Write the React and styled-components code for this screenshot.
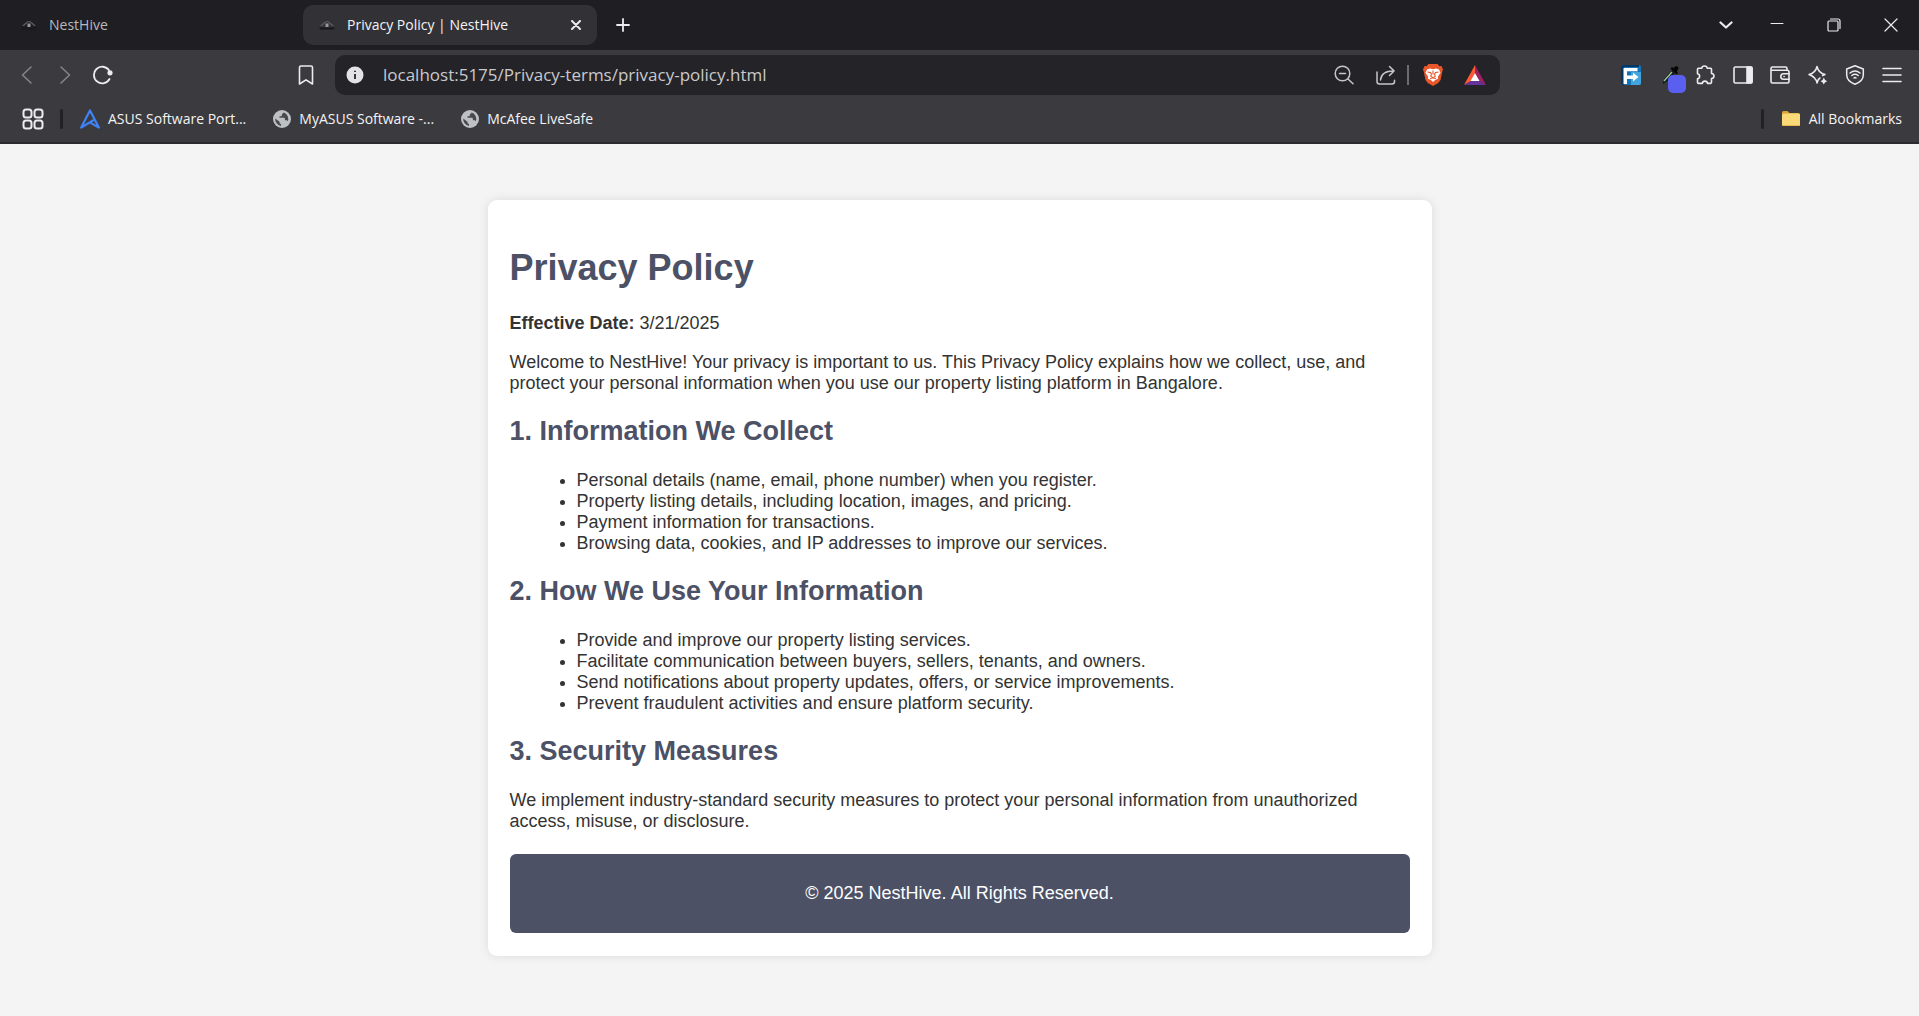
import React from "react";
import styled, { createGlobalStyle } from "styled-components";

const GlobalStyle = createGlobalStyle`
  body {
    margin: 0;
    background: #f4f4f4;
    font-family: "Liberation Sans", Arial, sans-serif;
    font-size: 18px;
    line-height: 21px;
    color: #333;
  }
`;

/* ---------- browser chrome ---------- */

const Chrome = styled.header`
  background: #3b3a3e;
  color: #f3f3f5;
  font-family: "Open Sans", "Noto Sans", sans-serif;
  font-size: 14px;
  line-height: 20px;
  border-bottom: 2px solid #2d2b31;
`;

const TabStrip = styled.div`
  display: flex;
  align-items: center;
  height: 50px;
  padding-left: 5px;
  background: #1f1e23;
`;

const TabList = styled.div`
  display: flex;
  gap: 4px;
  margin-right: 8px;
`;

const Tab = styled.div`
  box-sizing: border-box;
  display: flex;
  align-items: center;
  width: 294px;
  height: 40px;
  padding: 0 8px 0 16px;
  border-radius: 10px;
  background: ${(p) => (p.$active ? "#323136" : "transparent")};
`;

const TabTitle = styled.button`
  flex: 1;
  display: flex;
  align-items: center;
  gap: 12px;
  padding: 0;
  border: 0;
  background: none;
  font: inherit;
  text-align: left;
  white-space: nowrap;
  color: ${(p) => (p.$active ? "#f3f3f5" : "#b9b9bc")};
`;

const tones = { bright: "#ececee", soft: "#c6c5ca", dim: "#858489" };

const IconButton = styled.button`
  flex: none;
  display: flex;
  align-items: center;
  justify-content: center;
  width: ${(p) => p.$width || 38}px;
  height: ${(p) => p.$height || 40}px;
  padding: 0;
  border: 0;
  background: none;
  color: ${(p) => tones[p.$tone || "bright"]};
`;

const Spacer = styled.div`
  flex: 1;
`;

const Toolbar = styled.div`
  display: flex;
  align-items: center;
  height: 50px;
  padding: 0 8px;
`;

const NavGroup = styled.nav`
  display: flex;
  flex: 0 0 317px;
  margin-right: 10px;
`;

const AddressBar = styled.form`
  flex: 1;
  display: flex;
  align-items: center;
  height: 40px;
  padding-right: 4px;
  border-radius: 10px;
  background: #242328;
`;

const AddressInput = styled.input`
  flex: 1;
  min-width: 0;
  padding: 0;
  margin-left: 8px;
  border: 0;
  outline: 0;
  background: none;
  font: inherit;
  font-size: 17px;
  line-height: 24px;
  color: #c9c9cd;
`;

const AddressDivider = styled.span`
  width: 2px;
  height: 20px;
  margin-right: 3px;
  background: #6c6b71;
`;

const ExtensionGroup = styled.div`
  display: flex;
  flex: 0 0 299px;
  justify-content: space-between;
  margin-left: 112px;
`;

const BookmarkBar = styled.div`
  display: flex;
  align-items: center;
  height: 38px;
  padding: 0 17px 4px 14px;
`;

const BarDivider = styled.span`
  width: 3px;
  height: 20px;
  margin: 0 17px 0 8px;
  border-radius: 2px;
  background: #222126;
`;

const BookmarkLinks = styled.div`
  display: flex;
  gap: 27px;
`;

const BookmarkLink = styled.a`
  display: flex;
  align-items: center;
  gap: 8px;
  color: inherit;
  text-decoration: none;
  white-space: nowrap;
`;

const Glyph = ({ size = 24, width = 1.6, children, box = 24 }) => (
  <svg
    width={size}
    height={size}
    viewBox={`0 0 ${box} ${box}`}
    fill="none"
    stroke="currentColor"
    strokeWidth={width}
    strokeLinecap="round"
    strokeLinejoin="round"
    aria-hidden="true"
  >
    {children}
  </svg>
);

const Favicon = () => (
  <Glyph size={16} box={16} width={1.2}>
    <path d="M2 8.500C4.500 7.500 5.500 4.500 8 4.500s3.500 3 6 4" stroke="#5d5c60" />
    <path d="M1.500 11.500h13" stroke="#19181b" strokeWidth="2" />
    <rect x="6.500" y="6.500" width="3" height="3.500" fill="#98979b" stroke="none" />
  </Glyph>
);

const Globe = () => (
  <svg width="18" height="18" viewBox="0 0 18 18" aria-hidden="true">
    <circle cx="9" cy="9" r="9" fill="#bdc1c6" />
    <path
      d="M10.500 2.200c.3 1.200-.6 1.600-1.600 1.800v1.200c0 .7-.5 1-1.200 1H6.500v1.600h4c.9 0 1.400.5 1.400 1.300v1.200h1.300c.9 0 1.400.4 1.600 1.100A7 7 0 0 0 10.500 2.200ZM2.200 8.400A7 7 0 0 0 8 15.900v-2c-.9 0-1.500-.5-1.500-1.400v-.8Z"
      fill="#48494d"
    />
  </svg>
);

const AsusMark = () => (
  <svg width="20" height="20" viewBox="0 0 20 20" fill="none" stroke="#3f83f8" strokeWidth="2.200" strokeLinejoin="round" strokeLinecap="round" aria-hidden="true">
    <path d="M10 1.500 1.200 18.600 12.800 11.500M10 1.500l8.800 17.100-9-5.200" />
  </svg>
);

const FolderIcon = () => (
  <svg width="20" height="18" viewBox="0 0 20 18" aria-hidden="true">
    <path d="M1 2.500Q1 1 2.500 1h4L8.500 3H17q2 0 2 2v9H1z" fill="#d9a23a" />
    <rect x="1" y="3.500" width="18" height="12.500" rx="1.500" fill="#f9d978" />
    <path d="M1.500 15.500h17" stroke="#eab84e" />
  </svg>
);

const BraveIcon = () => (
  <svg width="22" height="24" viewBox="0 0 22 24" aria-hidden="true">
    <path d="M6.500 1h9l2 2.200 2-.3L21 6.500l-.7 2L18.500 17l-2.300 3L11 23l-5.200-3-2.300-3L1.700 8.500 1 6.500l1.500-3.600 2 .3z" fill="#e9572b" />
    <path d="m5 6.500 3-1 3 .7 3-.7 3 1 1.500 3.300-2.700 4 .4 2-3 1.200L11 19l-2.200-2-3-1.200.4-2-2.700-4z" fill="#fff" />
    <path d="m5.500 9 3 .6 1 1.400-.8 2.200L11 14.600l2.300-1.400-.8-2.200 1-1.400 3-.6M11 7.500v4M8 15.700l3-.9 3 .9" fill="none" stroke="#e9572b" strokeWidth="1.100" />
  </svg>
);

const BatIcon = () => (
  <svg width="24" height="22" viewBox="0 0 24 22" aria-hidden="true">
    <path d="M12 1 1 21l7-4 4-8z" fill="#ff5a30" />
    <path d="m12 1 11 20-7-4-4-8z" fill="#9e2065" />
    <path d="M1 21h22l-7-4H8z" fill="#66339a" />
    <path d="m12 9 4.500 8h-9z" fill="#fff" />
  </svg>
);

const ForwardExtension = () => (
  <svg width="20" height="20" viewBox="0 0 20 20" aria-hidden="true">
    <rect width="20" height="20" rx="2" fill="#1474b8" />
    <path d="M10 7h10v11q0 2-2 2h-8z" fill="#42a5dd" />
    <path d="M0 2q0-2 2-2h16v2H3v18H2q-2 0-2-2z" fill="#063764" />
    <path d="M2.500 3h14v3.200H6v4.300h6V7.800L17.500 12 12 16.500V14H6v5H2.500z" fill="#fff" />
  </svg>
);

const DropperExtension = () => (
  <svg width="36" height="36" viewBox="0 0 36 36" aria-hidden="true">
    <path d="m13 25 1.500-3.500L22 13l3 3-7.500 8-4.500 3z" fill="#171719" />
    <path d="m14 24 8-9" stroke="#94c99a" strokeWidth="1.400" />
    <path d="m20.500 11.500 6 6 1.500-1.500-1.200-1.500 1.400-2.500c1-2-1-3.500-3-2.500L23.500 11 22 10z" fill="#050505" />
    <rect x="18" y="18" width="18" height="18" rx="5" fill="#5a5ff0" />
  </svg>
);

const pageTabs = [
  { title: "NestHive", active: false },
  { title: "Privacy Policy | NestHive", active: true },
];

const bookmarks = [
  { label: "ASUS Software Port...", icon: <AsusMark /> },
  { label: "MyASUS Software -...", icon: <Globe /> },
  { label: "McAfee LiveSafe", icon: <Globe /> },
];

const BrowserChrome = () => (
  <Chrome>
    <TabStrip>
      <TabList>
        {pageTabs.map((tab) => (
          <Tab key={tab.title} $active={tab.active}>
            <TabTitle type="button" $active={tab.active}>
              <Favicon />
              {tab.title}
            </TabTitle>
            {tab.active && (
              <IconButton $width={26} $height={26} type="button" aria-label="Close tab">
                <Glyph size={10} box={10} width={2}><path d="m1 1 8 8M9 1 1 9" /></Glyph>
              </IconButton>
            )}
          </Tab>
        ))}
      </TabList>
      <IconButton $width={36} type="button" aria-label="New tab">
        <Glyph size={14} box={14} width={1.8}><path d="M7 1v12M1 7h12" /></Glyph>
      </IconButton>
      <Spacer />
      <IconButton $width={44} type="button" aria-label="Search tabs">
        <Glyph size={14} box={14} width={2.2}><path d="m1.500 4.500 5.500 5 5.500-5" /></Glyph>
      </IconButton>
      <IconButton $width={57} $height={50} type="button" aria-label="Minimize">
        <Glyph size={14} box={14} width={1}><path d="M1 5.500h12" /></Glyph>
      </IconButton>
      <IconButton $width={57} $height={50} type="button" aria-label="Restore">
        <Glyph size={14} box={14} width={1.2}>
          <rect x="1" y="3" width="10" height="10" rx="1" />
          <path d="M3.500 1H11q2 0 2 2v7.500" />
        </Glyph>
      </IconButton>
      <IconButton $width={57} $height={50} type="button" aria-label="Close window">
        <Glyph size={14} box={14} width={1.2}><path d="m1 1 12 12M13 1 1 13" /></Glyph>
      </IconButton>
    </TabStrip>

    <Toolbar>
      <NavGroup>
        <IconButton $tone="dim" type="button" aria-label="Back">
          <Glyph size={20} box={20}><path d="m14 2-8.500 8 8.500 8" /></Glyph>
        </IconButton>
        <IconButton $tone="dim" type="button" aria-label="Forward">
          <Glyph size={20} box={20}><path d="m6 2 8.500 8L6 18" /></Glyph>
        </IconButton>
        <IconButton type="button" aria-label="Reload">
          <Glyph size={20} box={20} width={1.8}>
            <path d="M16.500 14A8.300 8.300 0 1 1 16 5.200" />
            <circle cx="17" cy="7.800" r="1.700" fill="currentColor" />
          </Glyph>
        </IconButton>
        <Spacer />
        <IconButton type="button" aria-label="Bookmark this page">
          <Glyph size={20} box={20} width={1.6}><path d="M3.500 2.500Q3.500 1 5 1h10q1.500 0 1.500 1.500V19L10 14.800 3.500 19z" /></Glyph>
        </IconButton>
      </NavGroup>

      <AddressBar onSubmit={(e) => e.preventDefault()}>
        <IconButton $width={40} type="button" aria-label="Site information">
          <svg width="18" height="18" viewBox="0 0 18 18" aria-hidden="true">
            <circle cx="9" cy="9" r="8.500" fill="#e3e2e7" />
            <path d="M9 8v5M9 4.800v1.200" stroke="#242328" strokeWidth="1.800" />
          </svg>
        </IconButton>
        <AddressInput
          type="text"
          aria-label="Address"
          defaultValue="localhost:5175/Privacy-terms/privacy-policy.html"
          spellCheck={false}
        />
        <IconButton $width={42} $tone="soft" type="button" aria-label="Zoom">
          <Glyph size={20} box={20} width={1.5}>
            <circle cx="8.500" cy="8.500" r="7.300" />
            <path d="M5.500 8.500h6M14 14l5 4.800" />
          </Glyph>
        </IconButton>
        <IconButton $width={42} $tone="soft" type="button" aria-label="Share">
          <Glyph size={20} box={20} width={1.5}>
            <path d="M1 7v9.500Q1 19 3.500 19H16q2.500 0 2.500-2.500v-1.200M4.500 15C5 9.500 9 6 17.500 6M13.500 1.500l4.500 4.400-4.500 4.600" />
          </Glyph>
        </IconButton>
        <AddressDivider />
        <IconButton $width={42} type="button" aria-label="Brave Shields"><BraveIcon /></IconButton>
        <IconButton $width={42} type="button" aria-label="Brave Rewards"><BatIcon /></IconButton>
      </AddressBar>

      <ExtensionGroup>
        <IconButton $width={37} type="button" aria-label="Forward extension"><ForwardExtension /></IconButton>
        <IconButton $width={37} type="button" aria-label="Color picker"><DropperExtension /></IconButton>
        <IconButton $width={37} type="button" aria-label="Extensions">
          <Glyph size={20} box={20} width={1.6}>
            <path d="M3.500 3.200h3.300C7 .3 12 .3 12.200 3.200h3.300q1 0 1 1v4.300c3.300.2 3.300 4.800 0 5v3.700q0 1-1 1.200h-3c-.3-3-4.900-3-5.200 0H3.500q-1 0-1-1.200v-3.500c2.800-.5 2.800-4.500 0-5v-4.500q0-1 1-1z" />
          </Glyph>
        </IconButton>
        <IconButton $width={37} type="button" aria-label="Sidebar">
          <Glyph size={20} box={20} width={1.6}>
            <rect x="1" y="2" width="18" height="16" rx="1.500" />
            <path d="M14 2h4q1 0 1 1v14q0 1-1 1h-4z" fill="currentColor" />
          </Glyph>
        </IconButton>
        <IconButton $width={37} type="button" aria-label="Wallet">
          <Glyph size={20} box={20} width={1.6}>
            <path d="M17 5V3.500Q17 2 15.500 2h-13Q1 2 1 3.500v13Q1 18 2.500 18h15q1.500 0 1.500-1.500V7q0-1.800-1.800-1.800H1.500" />
            <path d="M19 8.800h-5.500a2.700 2.700 0 0 0 0 5.400H19M14 11.500h.1" />
          </Glyph>
        </IconButton>
        <IconButton $width={37} type="button" aria-label="Assistant">
          <Glyph size={20} box={20} width={1.5}>
            <path d="M12 13c-1.800.8-2.200 2.200-3 5q-1-6-8-8.500 6.500-1.500 8-8 1.500 6.500 8 8-1.500.6-2.500 1.200" />
            <path d="M15.800 12.500q.6 2.700 3.400 3.700-2.800.8-3.400 3.300-.7-2.500-3.200-3.300 2.600-.9 3.200-3.700Z" fill="currentColor" stroke="none" />
          </Glyph>
        </IconButton>
        <IconButton $width={37} type="button" aria-label="VPN">
          <Glyph size={20} box={20} width={1.5}>
            <path d="M10 .8 18.300 4v6c0 5-3.800 7.500-8.300 9.300C5.500 17.500 1.700 15 1.700 10V4z" />
            <path d="M5 8q5-4 10 0M6.800 10.500q3.200-2.500 6.400 0M9 13q1-1 2 0" />
          </Glyph>
        </IconButton>
        <IconButton $width={37} type="button" aria-label="Menu">
          <Glyph size={20} box={20} width={1.6}><path d="M1 3.500h18M1 10h18M1 16.500h18" /></Glyph>
        </IconButton>
      </ExtensionGroup>
    </Toolbar>

    <BookmarkBar>
      <IconButton $height={38} type="button" aria-label="Apps">
        <Glyph size={22} box={22} width={2}>
          {[1.5, 12.5].map((x) =>
            [1.5, 12.5].map((y) => <rect key={`${x}-${y}`} x={x} y={y} width="8" height="8" rx="2.500" />)
          )}
        </Glyph>
      </IconButton>
      <BarDivider />
      <BookmarkLinks>
        {bookmarks.map((item) => (
          <BookmarkLink key={item.label} href="#">
            {item.icon}
            {item.label}
          </BookmarkLink>
        ))}
      </BookmarkLinks>
      <Spacer />
      <BarDivider />
      <BookmarkLink href="#">
        <FolderIcon />
        All Bookmarks
      </BookmarkLink>
    </BookmarkBar>
  </Chrome>
);

/* ---------- policy page ---------- */

const Card = styled.main`
  box-sizing: border-box;
  width: calc(100% - 32px);
  max-width: 944px;
  margin: 56px auto;
  padding: 23px 22px;
  border-radius: 9px;
  background: #fff;
  box-shadow: 0 0 11px rgba(0, 0, 0, 0.1);
`;

const Title = styled.h1`
  margin: 24px 0;
  font-size: 36px;
  line-height: 42px;
  color: #4c5166;
`;

const SectionTitle = styled.h2`
  margin: 21px 0 23px;
  font-size: 27px;
  line-height: 32px;
  color: #4c5166;
`;

const Paragraph = styled.p`
  margin: 18px 0;
`;

const List = styled.ul`
  margin: 21px;
  padding-left: 46px;
`;

const Footer = styled.footer`
  margin-top: 22px;
  padding: 11px;
  border-radius: 6px;
  background: #4c5166;
  color: #fff;
  text-align: center;
`;

const sections = [
  {
    title: "1. Information We Collect",
    items: [
      "Personal details (name, email, phone number) when you register.",
      "Property listing details, including location, images, and pricing.",
      "Payment information for transactions.",
      "Browsing data, cookies, and IP addresses to improve our services.",
    ],
  },
  {
    title: "2. How We Use Your Information",
    items: [
      "Provide and improve our property listing services.",
      "Facilitate communication between buyers, sellers, tenants, and owners.",
      "Send notifications about property updates, offers, or service improvements.",
      "Prevent fraudulent activities and ensure platform security.",
    ],
  },
];

export default function App() {
  return (
    <>
      <GlobalStyle />
      <BrowserChrome />
      <Card>
        <Title>Privacy Policy</Title>
        <Paragraph>
          <strong>Effective Date:</strong> 3/21/2025
        </Paragraph>
        <Paragraph>
          Welcome to NestHive! Your privacy is important to us. This Privacy Policy explains how we collect, use, and
          protect your personal information when you use our property listing platform in Bangalore.
        </Paragraph>
        {sections.map((section) => (
          <section key={section.title}>
            <SectionTitle>{section.title}</SectionTitle>
            <List>
              {section.items.map((item) => (
                <li key={item}>{item}</li>
              ))}
            </List>
          </section>
        ))}
        <SectionTitle>3. Security Measures</SectionTitle>
        <Paragraph>
          We implement industry-standard security measures to protect your personal information from unauthorized
          access, misuse, or disclosure.
        </Paragraph>
        <Footer>
          <Paragraph>© 2025 NestHive. All Rights Reserved.</Paragraph>
        </Footer>
      </Card>
    </>
  );
}
